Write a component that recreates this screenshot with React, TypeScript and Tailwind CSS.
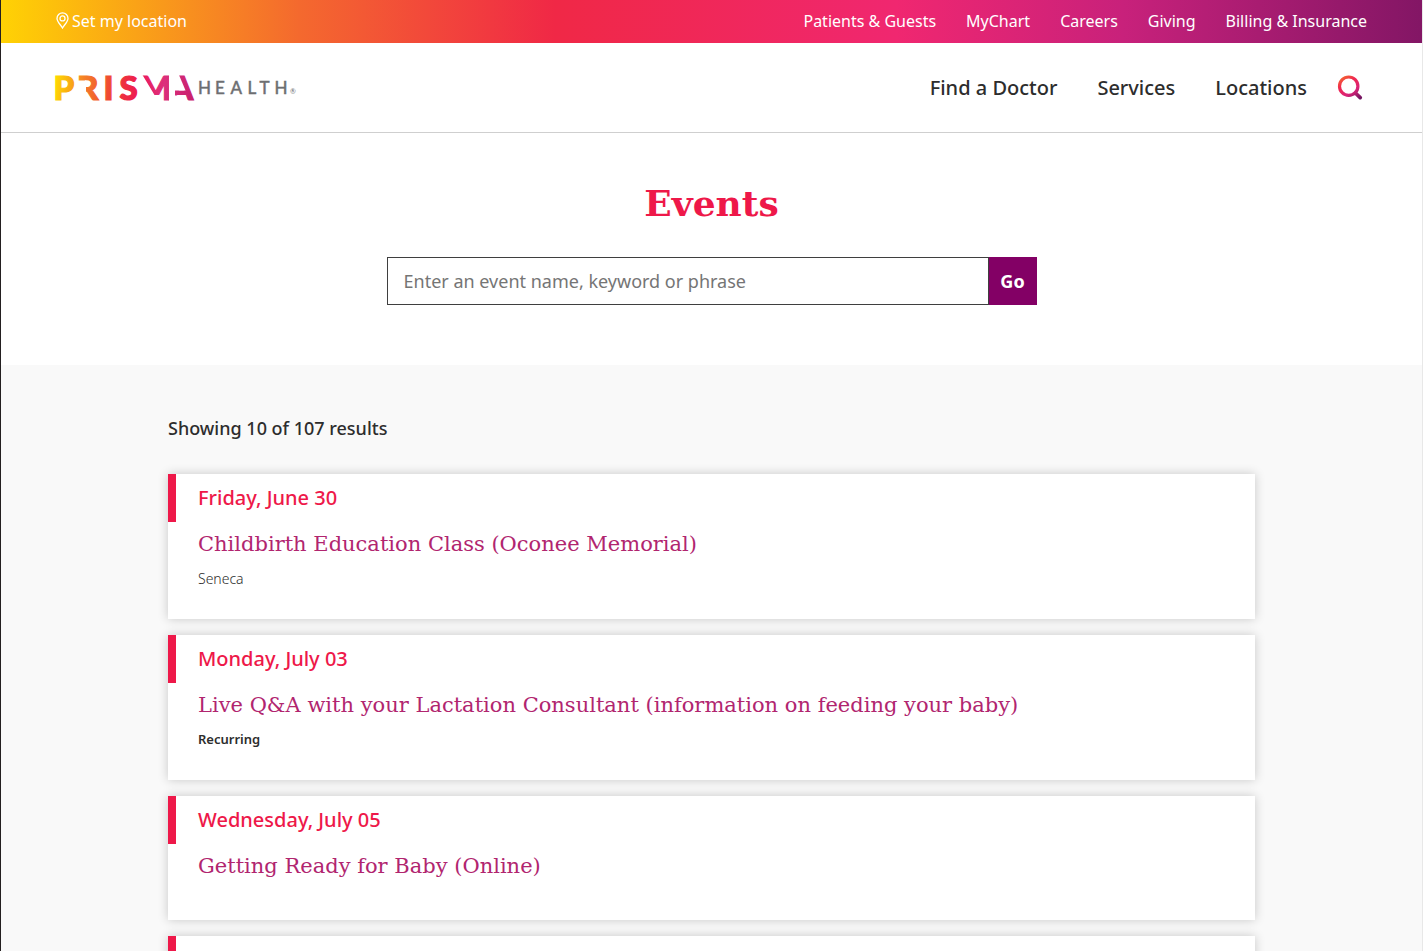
import { useState } from "react";

type EventItem = {
    date: string;
    title: string;
    location?: string;
    recurring?: boolean;
};

const topLinks = ["Patients & Guests", "MyChart", "Careers", "Giving", "Billing & Insurance"];
const mainLinks = ["Find a Doctor", "Services", "Locations"];

const events: EventItem[] = [
    { date: "Friday, June 30", title: "Childbirth Education Class (Oconee Memorial)", location: "Seneca" },
    { date: "Monday, July 03", title: "Live Q&A with your Lactation Consultant (information on feeding your baby)", recurring: true },
    { date: "Wednesday, July 05", title: "Getting Ready for Baby (Online)" },
];

export default function App() {
    return (
        <div className="h-screen overflow-hidden border-l border-l-[#231f20] border-r border-r-[#e8e8e8] bg-[#f9f9f9] font-['Noto_Sans',sans-serif] text-[#2d2d2d]">
            <TopBar />
            <Header />
            <main>
                <EventSearch />
                <section className="mx-auto max-w-[1087px] pt-[51px]">
                    <p className="mb-[34px] text-[18px] leading-6 font-medium">Showing 10 of 107 results</p>
                    <ul className="flex flex-col gap-4">
                        {events.map(e => <EventCard key={e.title} event={e} />)}
                        <li className="bg-white shadow-[0_0_10px_rgba(0,0,0,0.2)]">
                            <div className="h-12 border-l-8 border-[#ee1849]" />
                        </li>
                    </ul>
                </section>
            </main>
        </div>
    );
}

function TopBar() {
    return (
        <div className="flex h-[43px] items-center justify-between bg-[linear-gradient(90deg,#ffd204_0%,#f4692e_21%,#f02846_39%,#f02770_63%,#c8217b_79%,#831665_100%)] px-[55px] pb-[2px] text-[16px] leading-6 text-white">
            <a href="#location" className="flex items-center gap-[3px]">
                <PinIcon />
                Set my location
            </a>
            <nav className="flex gap-[30px]">
                {topLinks.map(l => <a key={l} href="#top">{l}</a>)}
            </nav>
        </div>
    );
}

function Header() {
    return (
        <header className="flex h-[90px] items-center justify-between border-b border-[#cfcfcf] bg-white pr-[59px] pl-[50px]">
            <a href="#home" aria-label="Prisma Health">
                <Logo />
            </a>
            <div className="flex items-center gap-[30px]">
                <nav className="flex gap-10 text-[20px] leading-7 font-medium">
                    {mainLinks.map(l => <a key={l} href="#main">{l}</a>)}
                </nav>
                <button type="button" aria-label="Search">
                    <SearchIcon />
                </button>
            </div>
        </header>
    );
}

function EventSearch() {
    const [query, setQuery] = useState("");

    return (
        <section className="bg-white px-4 pt-[46px] pb-[60px]">
            <h1 className="mb-[30px] text-center font-['DejaVu_Serif',serif] text-[36px] leading-[48px] font-bold text-[#ee1849]">Events</h1>
            <form className="mx-auto flex h-12 max-w-[650px]" onSubmit={e => e.preventDefault()}>
                <input
                    type="text"
                    aria-label="Event name, keyword or phrase"
                    placeholder="Enter an event name, keyword or phrase"
                    value={query}
                    onChange={e => setQuery(e.target.value)}
                    className="min-w-0 flex-1 border border-[#3f3f3f] bg-white px-4 text-[18px] outline-none placeholder:text-[#757575]"
                />
                <button type="submit" className="w-12 bg-[#830065] text-[18px] font-bold text-white">Go</button>
            </form>
        </section>
    );
}

function EventCard({ event }: { event: EventItem }) {
    return (
        <li className="bg-white pb-[30px] shadow-[0_0_10px_rgba(0,0,0,0.2)]">
            <p className="border-l-8 border-[#ee1849] pl-[22px] text-[20px] leading-[48px] font-medium text-[#ee1849]">{event.date}</p>
            <div className="px-[30px] pt-2">
                <h2 className="mb-[10px] font-['DejaVu_Serif',serif] text-[21px] leading-7 text-[#b1256f]">
                    <a href="#event">{event.title}</a>
                </h2>
                {event.location && <p className="text-[14px] leading-[21px] font-light">{event.location}</p>}
                {event.recurring && <p className="text-[13px] leading-[21px] font-semibold">Recurring</p>}
            </div>
        </li>
    );
}

function PinIcon() {
    return (
        <svg width="13" height="17" viewBox="0 0 13 17" fill="none" stroke="currentColor" strokeWidth="1.3" aria-hidden="true">
            <path d="M6.5 16C4.6 12.7 1 9.6 1 6.4A5.5 5.5 0 0 1 12 6.4C12 9.6 8.4 12.7 6.5 16Z" />
            <circle cx="6.5" cy="6.4" r="2.5" />
        </svg>
    );
}

function SearchIcon() {
    return (
        <svg width="26" height="26" viewBox="0 0 26 26" fill="none" aria-hidden="true" className="block">
            <defs>
                <linearGradient id="search" gradientUnits="userSpaceOnUse" x1="5" y1="1" x2="21" y2="25">
                    <stop offset="0" stopColor="#f4692e" />
                    <stop offset="0.3" stopColor="#f02850" />
                    <stop offset="0.65" stopColor="#d92378" />
                    <stop offset="1" stopColor="#6f1560" />
                </linearGradient>
            </defs>
            <circle cx="11.7" cy="11.2" r="9.2" stroke="url(#search)" strokeWidth="3.2" />
            <path d="M18.4 18L23.2 22.6" stroke="url(#search)" strokeWidth="3.8" strokeLinecap="round" />
        </svg>
    );
}

function Logo() {
    return (
        <svg width="252" height="50" viewBox="-4 -12 252 50" aria-hidden="true" className="block">
            <defs>
                <linearGradient id="prisma" gradientUnits="userSpaceOnUse" x1="0" y1="0" x2="139" y2="20">
                    <stop offset="0" stopColor="#ffdd00" />
                    <stop offset="0.22" stopColor="#f47b29" />
                    <stop offset="0.45" stopColor="#ee3a35" />
                    <stop offset="0.6" stopColor="#ee1a54" />
                    <stop offset="0.78" stopColor="#dc2f7c" />
                    <stop offset="1" stopColor="#c8206c" />
                </linearGradient>
            </defs>
            <text y="24.5" x="-1.5 22 48.5 64.5 85 115" fontFamily="Lato, sans-serif" fontSize="33" fontWeight="900" fill="url(#prisma)" stroke="url(#prisma)" strokeWidth="1.2">PRISMA</text>
            {/* stencil cuts in the R, M and A */}
            <g fill="#fff">
                <path d="M22 5.5H31V26H22Z" />
                <path d="M84 0H87.5L99.500 20H106.500V26H84Z" />
                <path d="M114 0H124L130.500 15.500H114Z" />
                <path d="M114 15H120V20.500H124V27H114Z" />
            </g>
            <text y="18.5" x="143 160 175.5 192.5 204.5 219.5" fontFamily="Lato, sans-serif" fontSize="17" fill="#6d6e71" stroke="#6d6e71" strokeWidth="0.5">HEALTH</text>
            <text y="19" x="235" fontFamily="Lato, sans-serif" fontSize="7" fill="#6d6e71">®</text>
        </svg>
    );
}
